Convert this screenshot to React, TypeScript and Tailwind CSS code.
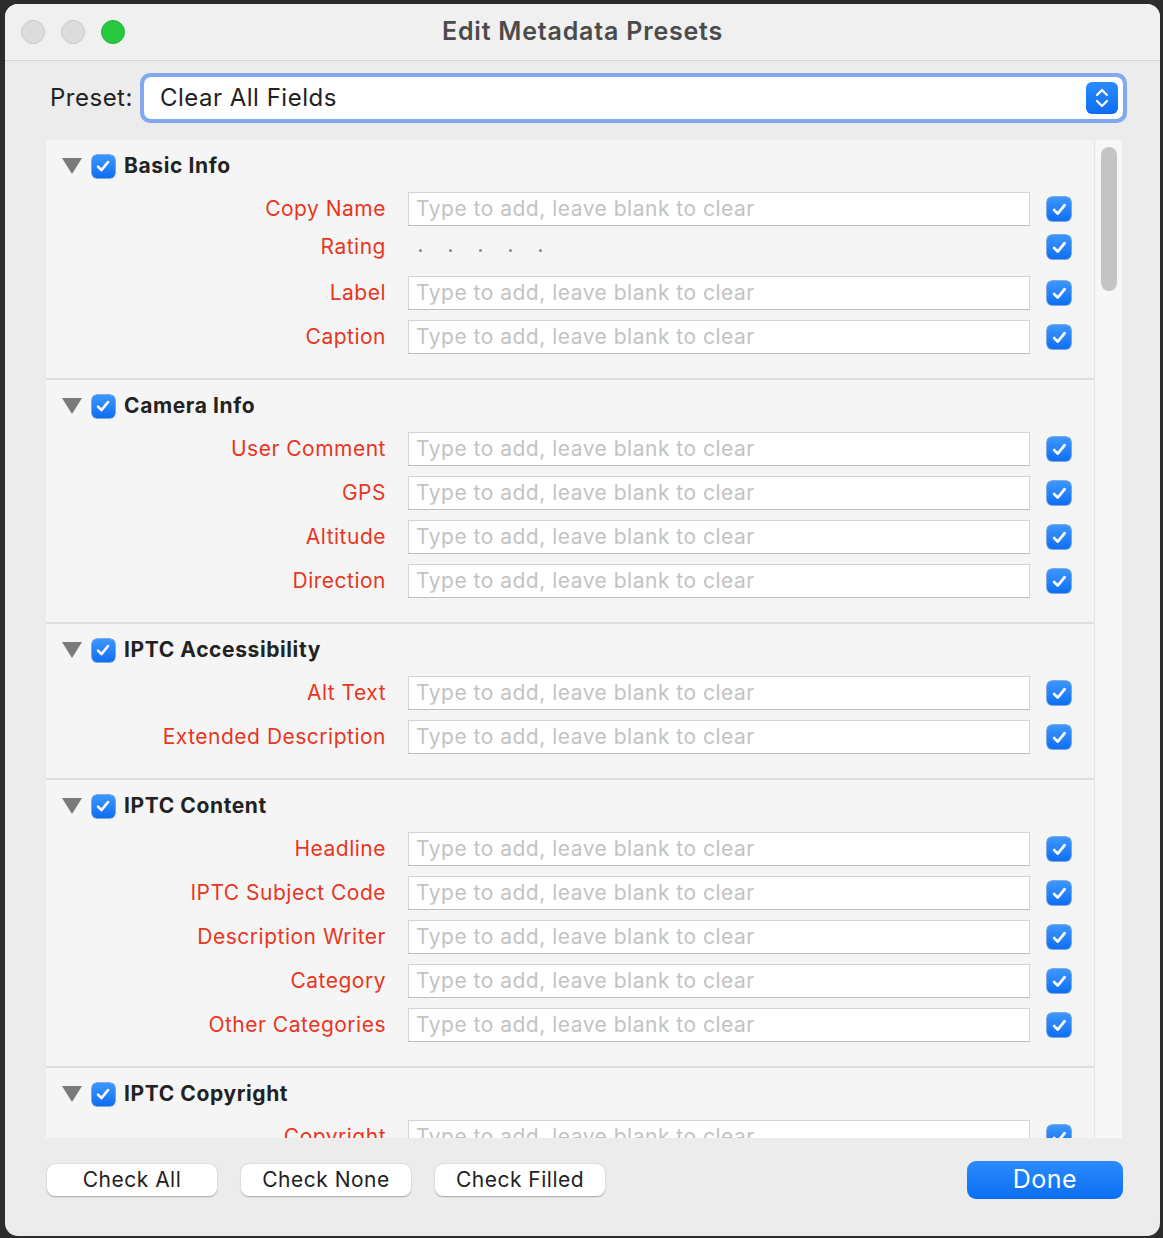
const FONT = { fontFamily: 'Inter, "Liberation Sans", sans-serif' };

type Section = {
  title: string;
  rows: string[];
};

const sections: Section[] = [
  { title: "Basic Info", rows: ["Copy Name", "Rating", "Label", "Caption"] },
  { title: "Camera Info", rows: ["User Comment", "GPS", "Altitude", "Direction"] },
  { title: "IPTC Accessibility", rows: ["Alt Text", "Extended Description"] },
  {
    title: "IPTC Content",
    rows: ["Headline", "IPTC Subject Code", "Description Writer", "Category", "Other Categories"],
  },
  { title: "IPTC Copyright", rows: ["Copyright", "Copyright Status"] },
];

const Check = ({ size = 24 }: { size?: number }) => (
  <div
    className="flex items-center justify-center rounded-[5px] bg-gradient-to-b from-[#3d97ff] to-[#0b6ef2] shadow-[0_0_0_0.5px_#0a5fd0]"
    style={{ width: size, height: size }}
  >
    <svg width={size * 0.7} height={size * 0.7} viewBox="0 0 16 16">
      <path
        d="M3 8.6 L6.4 12 L13 4"
        fill="none"
        stroke="white"
        strokeWidth="2.6"
        strokeLinecap="round"
        strokeLinejoin="round"
      />
    </svg>
  </div>
);

const Triangle = () => (
  <svg width="20" height="16" viewBox="0 0 20 16">
    <polygon points="0,0 20,0 10,16" fill="#7a7a7a" />
  </svg>
);

const FieldRow = ({ label }: { label: string }) => {
  const isRating = label === "Rating";
  return (
    <div className={isRating ? "flex h-[40px] items-center pb-[8px]" : "flex h-[44px] items-center"}>
      <div className="w-[340px] pb-[2px] text-right text-[21px] leading-none tracking-[0.5px] text-[#e8361f]">
        {label}
      </div>
      {isRating ? (
        <div className="ml-[22px] flex w-[622px] items-center gap-[27px] pl-[11px] pt-[6px]">
          {[0, 1, 2, 3, 4].map((i) => (
            <div key={i} className="h-[3px] w-[3px] rounded-full bg-[#8a8a8a]" />
          ))}
        </div>
      ) : (
        <div className="ml-[22px] flex h-[34px] w-[622px] items-center border border-[#d4d4d4] border-b-[#bdbdbd] bg-white pb-[2px] pl-[7px] text-[21px] leading-none tracking-[0.5px] text-[#c3c3c3]">
          Type to add, leave blank to clear
        </div>
      )}
      <div className="ml-[17px]">
        <Check />
      </div>
    </div>
  );
};

const SectionBlock = ({ section }: { section: Section }) => (
  <div className="border-b-2 border-[#dedede] pb-[19px] pt-[12px]">
    <div className="flex h-[28px] items-center pl-[16px]">
      <Triangle />
      <div className="ml-[10px]">
        <Check size={23} />
      </div>
      <div className="ml-[9px] pb-[2px] text-[21px] font-bold leading-none tracking-[0.6px] text-[#222222]">
        {section.title}
      </div>
    </div>
    <div className="mt-[7px]">
      {section.rows.map((r) => (
        <FieldRow key={r} label={r} />
      ))}
    </div>
  </div>
);

const Button = ({ children }: { children: string }) => (
  <button className="flex h-[32px] w-[170px] items-center justify-center rounded-[8px] bg-white text-[21px] tracking-[0.5px] text-[#222222] shadow-[0_0.5px_1.5px_rgba(0,0,0,0.3)]">
    {children}
  </button>
);

export default function App() {
  return (
    <div className="min-h-[1238px] w-[1163px] bg-[#2c2c2c] pl-[5px] pt-[4px]" style={FONT}>
      <div className="flex h-[1232px] w-[1155px] flex-col overflow-hidden rounded-[13px] bg-[#ececec]">
        {/* title bar */}
        <div className="relative flex h-[57px] items-center border-b border-[#d5d5d5] bg-[#f0f0f0]">
          <div className="flex gap-[16px] pl-[16px]">
            <div className="h-[24px] w-[24px] rounded-full border border-[#c8c8c8] bg-[#dcdcdc]" />
            <div className="h-[24px] w-[24px] rounded-full border border-[#c8c8c8] bg-[#dcdcdc]" />
            <div className="h-[24px] w-[24px] rounded-full border border-[#22b13a] bg-[#28c840]" />
          </div>
          <div className="absolute inset-x-0 text-center text-[25px] font-semibold tracking-[0.8px] text-[#4b4b4b]">
            Edit Metadata Presets
          </div>
        </div>

        {/* preset row */}
        <div className="flex items-center pl-[45px] pt-[12px]">
          <div className="text-[24px] tracking-[0.5px] text-[#222222]">Preset:</div>
          <div className="ml-[7px] flex h-[50px] w-[987px] items-center rounded-[10px] bg-[#82a8f0] p-[4px]">
            <div className="flex h-full w-full items-center rounded-[7px] bg-white pl-[16px] pr-[5px]">
              <div className="flex-1 text-[24px] tracking-[0.5px] text-[#222222]">Clear All Fields</div>
              <div className="flex h-[32px] w-[32px] items-center justify-center rounded-[6px] bg-gradient-to-b from-[#2a8bff] to-[#0b6ef2]">
                <svg width="16" height="24" viewBox="0 0 16 24">
                  <path
                    d="M3 9 L8 4 L13 9 M3 15 L8 20 L13 15"
                    fill="none"
                    stroke="white"
                    strokeWidth="2.2"
                    strokeLinecap="round"
                    strokeLinejoin="round"
                  />
                </svg>
              </div>
            </div>
          </div>
        </div>

        {/* scroll panel */}
        <div className="ml-[41px] mt-[17px] flex h-[998px] w-[1076px] overflow-hidden bg-[#f5f5f5]">
          <div className="h-full w-[1048px] overflow-hidden">
            {sections.map((s) => (
              <SectionBlock key={s.title} section={s} />
            ))}
          </div>
          <div className="h-full w-[28px] border-l border-[#e4e4e4] bg-[#f7f7f7] pl-[6px] pt-[7px]">
            <div className="h-[144px] w-[16px] rounded-full bg-[#c4c4c4]" />
          </div>
        </div>

        {/* buttons */}
        <div className="flex items-center pl-[42px] pr-[37px] pt-[23px]">
          <div className="flex gap-[24px]">
            <Button>Check All</Button>
            <Button>Check None</Button>
            <Button>Check Filled</Button>
          </div>
          <div className="flex-1" />
          <button className="flex h-[38px] w-[156px] items-center justify-center rounded-[9px] bg-gradient-to-b from-[#2a8bff] to-[#0b6ef2] text-[25px] tracking-[0.5px] text-white">
            Done
          </button>
        </div>
      </div>
    </div>
  );
}
